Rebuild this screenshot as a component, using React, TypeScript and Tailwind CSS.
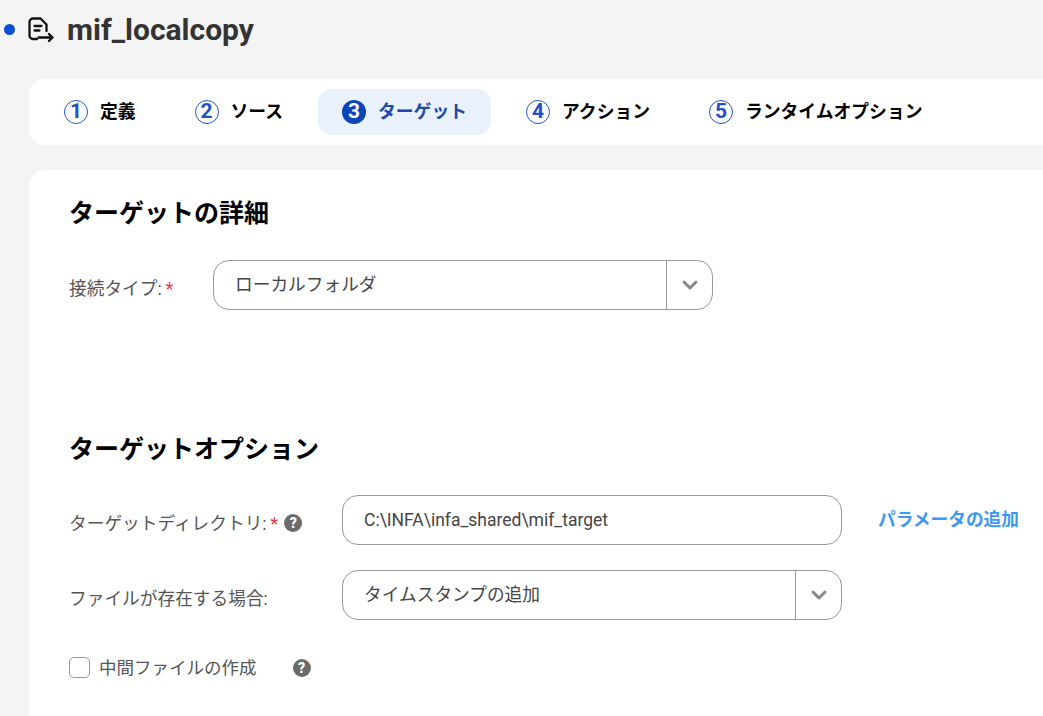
import React from "react";
import { ChevronDown } from "lucide-react";

const steps = [
  { n: 1, label: "定義" },
  { n: 2, label: "ソース" },
  { n: 3, label: "ターゲット", active: true },
  { n: 4, label: "アクション" },
  { n: 5, label: "ランタイムオプション" },
];

const TaskIcon = () => (
  <svg width="26" height="26" viewBox="0 0 26 26" fill="none" stroke="#111" strokeWidth="2.3" strokeLinecap="round" strokeLinejoin="round">
    <path d="M9 22H5A3.500 3.500 0 0 1 1.500 18.500V5A3.500 3.500 0 0 1 5 1.500H12.500L18.500 7.500V14" />
    <path d="M6.500 9H13.500M6.500 13.500H11.500" />
    <path d="M10.500 20.500H24.500M21 17L24.500 20.500L21 24" />
  </svg>
);

const HelpIcon = () => (
  <span className="flex h-[18px] w-[18px] items-center justify-center rounded-full bg-[#6b6b6b] text-[14px] font-black leading-none text-white">
    ?
  </span>
);

const Select = ({ value }: { value: string }) => (
  <div className="flex h-[50px] w-[500px] items-center rounded-[16px] border border-[#999] bg-white">
    <div className="flex-1 pl-[21px] text-[#444]">{value}</div>
    <div className="flex h-full w-[46px] items-center justify-center border-l border-[#999]">
      <ChevronDown className="h-[24px] w-[24px] text-[#888]" strokeWidth={3} />
    </div>
  </div>
);

export default function App() {
  return (
    <div className="flex h-[716px] flex-col overflow-hidden bg-[#f4f4f4] font-['Roboto','Noto_Sans_CJK_JP',sans-serif] text-[17.7px]">
      <div className="flex h-[79px] items-start pt-[13px]">
        <span className="ml-[4px] mt-[11px] h-[11px] w-[11px] rounded-full bg-[#0b50d0]" />
        <span className="ml-[13px] mt-[4px]">
          <TaskIcon />
        </span>
        <h1 className="ml-[13px] text-[30px] font-bold leading-[34px] text-[#333]">mif_localcopy</h1>
      </div>

      <div className="ml-[29px] flex h-[66px] items-center gap-[11px] rounded-l-[16px] bg-white pl-[11px]">
        {steps.map((s) => (
          <div
            key={s.n}
            className={
              s.active
                ? "flex h-[46px] items-center gap-[12px] rounded-[14px] bg-[#e9f1fd] px-[24px]"
                : "flex h-[46px] items-center gap-[12px] px-[24px]"
            }
          >
            <span
              className={
                s.active
                  ? "flex h-[24px] w-[24px] items-center justify-center rounded-full bg-[#0b45b8] text-[21px] font-bold text-white"
                  : "flex h-[24px] w-[24px] items-center justify-center rounded-full border border-[#2456c8] text-[21px] font-bold text-[#1f52c8]"
              }
            >
              {s.n}
            </span>
            <span className={s.active ? "text-[17.8px] font-bold text-[#2148a8]" : "text-[17.8px] font-bold text-black"}>
              {s.label}
            </span>
          </div>
        ))}
      </div>

      <div className="ml-[29px] mt-[25px] flex-1 rounded-tl-[16px] bg-white pl-[40px]">
        <h2 className="mt-[26px] text-[25px] font-bold leading-[36px] text-black">ターゲットの詳細</h2>
        <div className="mt-[28px] flex items-center">
          <div className="w-[144px] pt-[8px] text-[#555]">
            接続タイプ:<span className="ml-[4px] text-[#e8384f]">*</span>
          </div>
          <Select value="ローカルフォルダ" />
        </div>

        <h2 className="mt-[122px] text-[25px] font-bold leading-[36px] text-black">ターゲットオプション</h2>

        <div className="mt-[27px] flex items-center">
          <div className="flex w-[273px] items-center pt-[8px] text-[#555]">
            ターゲットディレクトリ:<span className="ml-[4px] text-[#e8384f]">*</span>
            <span className="ml-[6px] -translate-y-px">
              <HelpIcon />
            </span>
          </div>
          <div className="flex h-[50px] w-[500px] items-center rounded-[16px] border border-[#999] pl-[21px] text-[17.5px] text-[#444]">
            C:\INFA\infa_shared\mif_target
          </div>
          <a className="ml-[36px] font-bold text-[#3d98f4]">パラメータの追加</a>
        </div>

        <div className="mt-[25px] flex items-center">
          <div className="w-[273px] pt-[8px] text-[#555]">ファイルが存在する場合:</div>
          <Select value="タイムスタンプの追加" />
        </div>

        <div className="mt-[33px] flex items-center">
          <span className="h-[21px] w-[21px] rounded-[5px] border border-[#999] bg-white" />
          <span className="ml-[9px] pt-[2px] text-[17.5px] text-[#555]">中間ファイルの作成</span>
          <span className="ml-[36px] pt-[2px]">
            <HelpIcon />
          </span>
        </div>
      </div>
    </div>
  );
}
